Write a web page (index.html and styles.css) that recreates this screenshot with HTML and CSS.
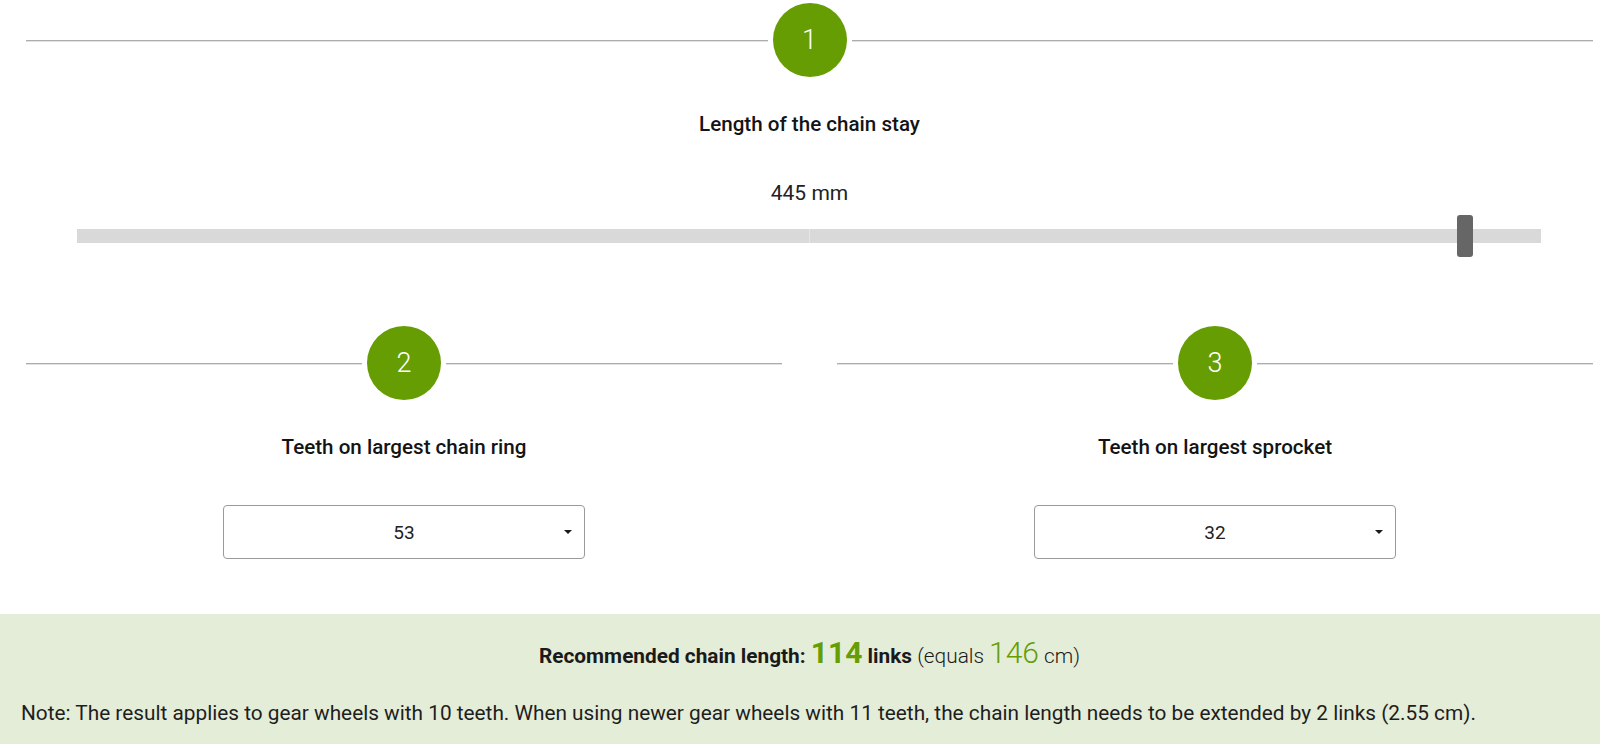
FILE: index.html
```html
<!DOCTYPE html>
<html lang="en">
<head>
<meta charset="utf-8">
<title>Chain length calculator</title>
<link rel="stylesheet" href="styles.css">
</head>
<body>
<main class="calc">
  <section class="step step-full">
    <div class="step-head">
      <span class="rule"></span>
      <span class="badge">1</span>
      <span class="rule"></span>
    </div>
    <h2 class="step-title">Length of the chain stay</h2>
    <div class="value">445 mm</div>
    <div class="slider">
      <div class="track"><span class="half"></span><span class="half"></span></div>
      <span class="thumb" style="left: 94.8%"></span>
    </div>
  </section>

  <div class="pair">
    <section class="step">
      <div class="step-head">
        <span class="rule"></span>
        <span class="badge">2</span>
        <span class="rule"></span>
      </div>
      <h2 class="step-title">Teeth on largest chain ring</h2>
      <div class="select">
        <select>
          <option>53</option>
        </select>
      </div>
    </section>
    <section class="step">
      <div class="step-head">
        <span class="rule"></span>
        <span class="badge">3</span>
        <span class="rule"></span>
      </div>
      <h2 class="step-title">Teeth on largest sprocket</h2>
      <div class="select">
        <select>
          <option>32</option>
        </select>
      </div>
    </section>
  </div>
</main>

<section class="result">
  <p class="result-main"><strong>Recommended chain length: <span class="num-bold">114</span> links</strong> <span class="light">(equals <span class="num-light">146</span> cm)</span></p>
  <p class="note">Note: The result applies to gear wheels with 10 teeth. When using newer gear wheels with 11 teeth, the chain length needs to be extended by 2 links (2.55 cm).</p>
</section>
</body>
</html>
```

FILE: styles.css
```css
html, body {
  margin: 0;
  padding: 0;
  background: #ffffff;
}

body {
  font-family: Roboto, "Liberation Sans", Arial, sans-serif;
  color: #1e1e1e;
  width: 1600px;
  overflow: hidden;
}

.calc {
  margin-left: 26px;
  width: 1567px;
  padding-top: 3px;
}

.step-head {
  display: flex;
  align-items: center;
  gap: 5px;
}

.rule {
  flex: 1;
  height: 1px;
  background: #acacac;
  box-shadow: 0 1px 0 #e2e2e2;
}

.badge {
  width: 74px;
  height: 74px;
  border-radius: 50%;
  background: #669d02;
  color: #ffffff;
  font-size: 27px;
  font-weight: 300;
  display: flex;
  align-items: center;
  justify-content: center;
  flex: none;
}

.step-title {
  margin: 35px 0 0;
  text-align: center;
  font-size: 20.6px;
  font-weight: 500;
  line-height: 24px;
  color: #141414;
}

.value {
  margin-top: 45px;
  text-align: center;
  font-size: 21px;
  line-height: 24px;
  color: #222;
}

.slider {
  position: relative;
  margin: 10px 52px 0 51px;
  height: 42px;
  display: flex;
  align-items: center;
}

.track {
  flex: 1;
  height: 14px;
  display: flex;
  gap: 1px;
  background: #e6e6e6;
}

.half {
  flex: 1;
  background: #d9d9d9;
}

.thumb {
  position: absolute;
  top: 0;
  width: 16px;
  height: 42px;
  margin-left: -8px;
  border-radius: 3px;
  background: #666666;
}

.pair {
  margin-top: 69px;
  display: grid;
  grid-template-columns: 1fr 1fr;
  column-gap: 55px;
}

.select {
  position: relative;
  width: 362px;
  height: 54px;
  margin: 46px auto 0;
}

.select select {
  -webkit-appearance: none;
  appearance: none;
  width: 100%;
  height: 100%;
  border: 1px solid #9a9a9a;
  border-radius: 4px;
  background: #ffffff;
  font-family: Roboto, "Liberation Sans", Arial, sans-serif;
  font-size: 19px;
  color: #222;
  text-align: center;
  text-align-last: center;
  padding: 0 20px;
  box-sizing: border-box;
}

.select::after {
  content: "";
  position: absolute;
  right: 13px;
  top: 25px;
  border-left: 4px solid transparent;
  border-right: 4px solid transparent;
  border-top: 4px solid #1a1a1a;
  pointer-events: none;
}

.result {
  margin-top: 55px;
  background: #e4edd8;
  padding: 21px 0 30px;
}

.result p {
  margin: 0;
}

.result-main {
  text-align: center;
  font-size: 20.8px;
  line-height: 36px;
  color: #1a1a1a;
  padding: 0 7px 0 26px;
}

.result-main strong {
  font-weight: 700;
}

.num-bold {
  color: #669d02;
  font-size: 30px;
  font-weight: 700;
}

.light {
  font-weight: 300;
}

.num-light {
  color: #669d02;
  font-size: 30px;
  font-weight: 300;
}

.note {
  margin-top: 27px !important;
  padding-left: 21px;
  font-size: 20.8px;
  line-height: 24px;
  color: #1e1e1e;
}
```
